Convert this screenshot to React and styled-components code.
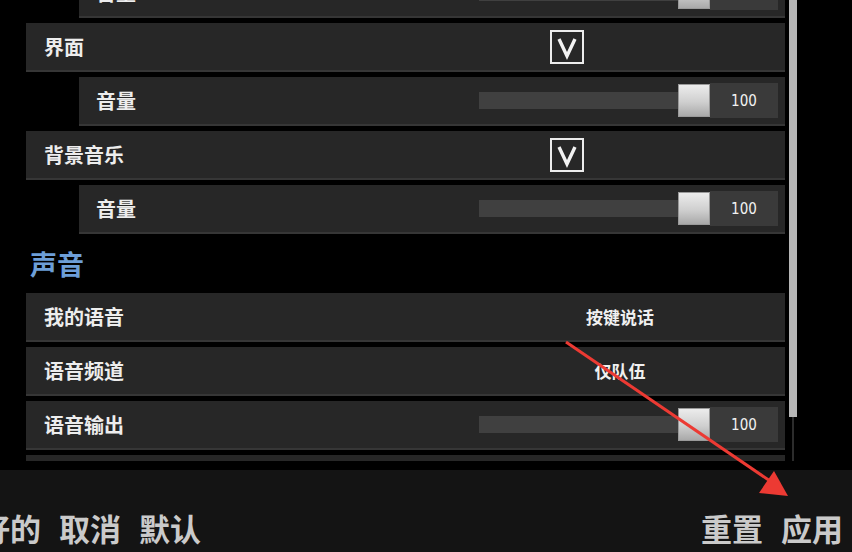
import React from "react";
import styled, { createGlobalStyle } from "styled-components";

const GlobalStyle = createGlobalStyle`
  html, body {
    margin: 0;
    padding: 0;
    background: #000;
  }
  body {
    font-family: "Noto Sans CJK SC", "Noto Sans", sans-serif;
  }
`;

const rows = [
  { type: "slider", sub: true, label: "音量", value: 100 },
  { type: "check", label: "界面" },
  { type: "slider", sub: true, label: "音量", value: 100 },
  { type: "check", label: "背景音乐" },
  { type: "slider", sub: true, label: "音量", value: 100 },
  { type: "heading", label: "声音" },
  { type: "option", label: "我的语音", value: "按键说话" },
  { type: "option", label: "语音频道", value: "仅队伍" },
  { type: "slider", label: "语音输出", value: 100 },
  { type: "empty" },
];

function Control({ row }) {
  if (row.type === "empty") return null;
  if (row.type === "check") {
    return (
      <CheckBox>
        <svg width="30" height="30" viewBox="0 0 30 30">
          <path
            d="M7 7 L15 24 L23 7"
            fill="none"
            stroke="#f2f2f2"
            strokeWidth="3.4"
            strokeLinejoin="miter"
          />
        </svg>
      </CheckBox>
    );
  }
  if (row.type === "option") {
    return <OptionText>{row.value}</OptionText>;
  }
  return (
    <Slider>
      <Track />
      <Knob />
      <ValueBox>{row.value}</ValueBox>
    </Slider>
  );
}

function App() {
  return (
    <Page>
      <GlobalStyle />
      <Viewport>
        <List>
          {rows.map((row, i) =>
            row.type === "heading" ? (
              <Heading key={i}>{row.label}</Heading>
            ) : (
              <Row key={i} $sub={row.sub}>
                <Label>{row.label}</Label>
                <Control row={row} />
              </Row>
            )
          )}
        </List>
        <Scrollbar>
          <Thumb />
          <Rail />
        </Scrollbar>
      </Viewport>
      <Footer>
        <ButtonGroup>
          <FooterButton>好的</FooterButton>
          <FooterButton>取消</FooterButton>
          <FooterButton>默认</FooterButton>
        </ButtonGroup>
        <ButtonGroup>
          <FooterButton>重置</FooterButton>
          <FooterButton>应用</FooterButton>
        </ButtonGroup>
      </Footer>
      <Annotation width="852" height="552" viewBox="0 0 852 552">
        <line x1="566" y1="342" x2="776" y2="485" stroke="#ec3a33" strokeWidth="3" />
        <polygon points="788,496 759,493 774,471" fill="#ec3a33" />
      </Annotation>
    </Page>
  );
}

export default App;

const Page = styled.div`
  position: relative;
  width: 852px;
  height: 552px;
  background: #000;
  overflow: hidden;
  display: flex;
  flex-direction: column;
`;

const Viewport = styled.div`
  height: 461px;
  margin-bottom: 9px;
  overflow: hidden;
  display: flex;
  padding-left: 26px;
  gap: 4px;
`;

const List = styled.div`
  width: 759px;
  margin-top: -31px;
  display: flex;
  flex-direction: column;
  gap: 5px;
`;

const Row = styled.div`
  flex: 0 0 49px;
  box-sizing: border-box;
  display: grid;
  grid-template-columns: 1fr 299px;
  align-items: center;
  margin-left: ${(p) => (p.$sub ? "53px" : "0")};
  padding: 0 7px 0 ${(p) => (p.$sub ? "17px" : "18px")};
  background: #272727;
  border-bottom: 2px solid #363636;
`;

const Label = styled.div`
  color: #ededed;
  font-size: 20px;
  font-weight: 700;
  line-height: 1;
`;

const Heading = styled.div`
  flex: 0 0 49px;
  display: flex;
  align-items: center;
  padding-left: 4px;
  color: #6d9ed8;
  font-size: 27px;
  font-weight: 700;
`;

const CheckBox = styled.div`
  width: 34px;
  height: 34px;
  box-sizing: border-box;
  margin-left: 71px;
  border: 2px solid #ececec;
  display: flex;
  align-items: center;
  justify-content: center;
`;

const OptionText = styled.div`
  width: 282px;
  text-align: center;
  color: #f0f0f0;
  font-size: 17px;
  font-weight: 700;
`;

const Slider = styled.div`
  display: flex;
  align-items: center;
  height: 35px;
`;

const Track = styled.div`
  width: 199px;
  height: 17px;
  background: #404040;
`;

const Knob = styled.div`
  width: 32px;
  height: 33px;
  box-sizing: border-box;
  border: 1px solid #9a9a9a;
  background: linear-gradient(#ececec, #cfcfcf 55%, #a9a9a9);
`;

const ValueBox = styled.div`
  width: 68px;
  height: 35px;
  background: #3a3a3a;
  color: #f2f2f2;
  display: flex;
  align-items: center;
  justify-content: center;
  font-family: "Liberation Sans Narrow", "DejaVu Sans Condensed", sans-serif;
  font-size: 15px;
`;

const Scrollbar = styled.div`
  width: 8px;
  display: flex;
  flex-direction: column;
  align-items: center;
`;

const Thumb = styled.div`
  width: 8px;
  height: 417px;
  background: #b6b6b6;
`;

const Rail = styled.div`
  width: 2px;
  flex: 1;
  background: #2c2c2c;
`;

const Footer = styled.div`
  flex: 1;
  background: #141414;
  display: flex;
  justify-content: space-between;
  align-items: flex-end;
  padding: 0 9px 6px 0;
  margin-left: -21px;
`;

const ButtonGroup = styled.div`
  display: flex;
  gap: 18px;
`;

const FooterButton = styled.div`
  color: #cacaca;
  font-size: 31px;
  font-weight: 700;
  line-height: 1.2;
`;

const Annotation = styled.svg`
  position: absolute;
  left: 0;
  top: 0;
  pointer-events: none;
`;
